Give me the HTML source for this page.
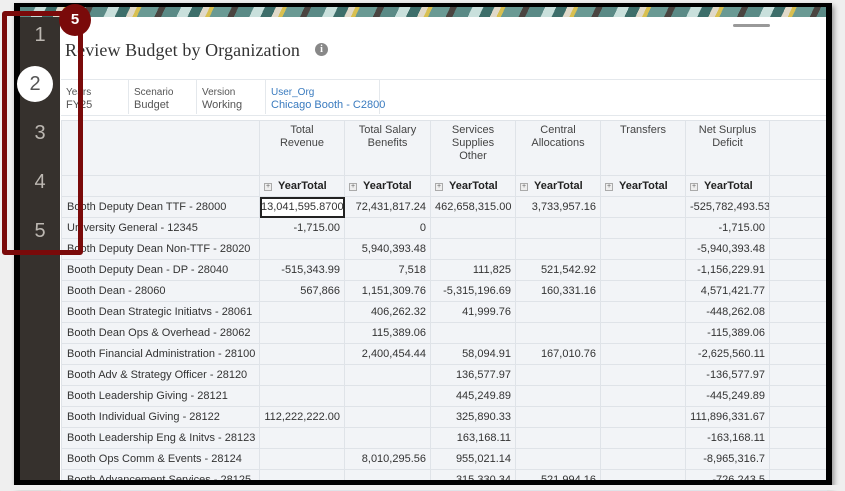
<!DOCTYPE html>
<html><head><meta charset="utf-8"><style>
*{margin:0;padding:0;box-sizing:border-box}
body{width:845px;height:490px;background:#efefef;position:relative;overflow:hidden;font-family:"Liberation Sans",Arial,sans-serif}
.abs{position:absolute}
#frame{left:14px;top:3px;width:818px;height:482px;background:#000;box-shadow:2px 3px 5px rgba(0,0,0,.4)}
#banner{left:20px;top:7px;width:806px;height:10px;background:repeating-linear-gradient(115deg,#5a8a86 0 14px,#c9e0dc 14px 24px,#3d6e6a 24px 34px,#e0d9c9 34px 40px,#d8c050 40px 44px,#6a9a94 44px 60px,#4a4440 60px 66px)}
#side{left:20px;top:17px;width:40px;height:463px;background:#36312d}
.num{position:absolute;left:20px;width:40px;text-align:center;color:#bdb8b2;font-size:20px;font-weight:300}
#c2{left:17px;top:66px;width:36px;height:36px;border-radius:50%;background:#fff;color:#555;font-size:20px;text-align:center;line-height:36px}
#content{left:60px;top:17px;width:766px;height:463px;background:#fff;overflow:hidden}
#title{left:65px;top:40px;font-family:"Liberation Serif",serif;font-size:18px;color:#333;letter-spacing:0.1px}
#info{left:315px;top:43px;width:13px;height:13px;border-radius:50%;background:#888;color:#fff;font:bold 10px "Liberation Serif",serif;text-align:center;line-height:13px}
#grab{left:733px;top:24px;width:37px;height:3px;background:#999;border-radius:2px}
#fbar{left:61px;top:79px;width:765px;height:37px;border-top:1px solid #e4e8ec;border-bottom:1px solid #e4e8ec}
.f{position:absolute;top:80px;height:34px;border-right:1px solid #e4e8ec;font-size:10px;color:#555;padding:6px 0 0 5px;line-height:13px;white-space:nowrap}
.f b{font-weight:normal;font-size:11px}
table{position:absolute;left:61px;top:120px;width:765px;border-collapse:collapse;table-layout:fixed;font-size:11px;color:#333}
td{border:1px solid #dfe3e8;background:#f2f4f7;height:21px;padding:0 4px;white-space:nowrap;overflow:hidden;text-align:right}
td.l{text-align:left;padding-left:5px}
tr.h td{height:55px;vertical-align:top;text-align:center;padding:3px 0 0;line-height:13px;color:#444;white-space:normal}
tr.y td{height:21px;text-align:left;font-weight:bold;font-size:11px;color:#222;padding-left:4px}
.pl{display:inline-block;width:8px;height:8px;border:1px solid #aaa;background:#eee;font-size:7px;line-height:6px;text-align:center;color:#666;vertical-align:1px;margin-right:6px;font-weight:normal}
#sel{outline:2px solid #222;outline-offset:-2px;background:#fff}
#redbox{left:2px;top:11px;width:81px;height:244px;border:5px solid #7a0a0a;border-radius:3px}
#badge{left:59px;top:4px;width:32px;height:32px;border-radius:50%;background:#7a0a0a;color:#fff;font-weight:bold;font-size:15px;text-align:center;line-height:32px}
</style></head><body>
<div id="frame" class="abs"></div>
<div id="banner" class="abs"></div>
<div id="side" class="abs"></div>
<div id="content" class="abs"></div>
<div class="num" style="top:24px">1</div>
<div id="c2" class="abs">2</div>
<div class="num" style="top:122px">3</div>
<div class="num" style="top:171px">4</div>
<div class="num" style="top:220px">5</div>
<div id="title" class="abs">Review Budget by Organization</div>
<div id="info" class="abs">i</div>
<div id="grab" class="abs"></div>
<div id="fbar" class="abs"></div>
<div class="f" style="left:61px;width:68px">Years<br><b>FY25</b></div>
<div class="f" style="left:129px;width:68px">Scenario<br><b>Budget</b></div>
<div class="f" style="left:197px;width:69px">Version<br><b>Working</b></div>
<div class="f" style="left:266px;width:114px;color:#3a7bbf">User_Org<br><b>Chicago Booth - C2800</b></div>
<table>
<colgroup><col style="width:198px"><col style="width:85px"><col style="width:86px"><col style="width:85px"><col style="width:85px"><col style="width:85px"><col style="width:84px"><col style="width:57px"></colgroup>
<tr class="h"><td></td><td>Total<br>Revenue</td><td>Total Salary<br>Benefits</td><td>Services<br>Supplies<br>Other</td><td>Central<br>Allocations</td><td>Transfers</td><td>Net Surplus<br>Deficit</td><td></td></tr>
<tr class="y"><td></td><td><span class="pl">+</span>YearTotal</td><td><span class="pl">+</span>YearTotal</td><td><span class="pl">+</span>YearTotal</td><td><span class="pl">+</span>YearTotal</td><td><span class="pl">+</span>YearTotal</td><td><span class="pl">+</span>YearTotal</td><td></td></tr>
<tr><td class="l">Booth Deputy Dean TTF - 28000</td><td id="sel" style="padding:0 1px;text-align:left">13,041,595.87000</td><td>72,431,817.24</td><td>462,658,315.00</td><td>3,733,957.16</td><td></td><td>-525,782,493.53</td><td></td></tr>
<tr><td class="l">University General - 12345</td><td>-1,715.00</td><td>0</td><td></td><td></td><td></td><td>-1,715.00</td><td></td></tr>
<tr><td class="l">Booth Deputy Dean Non-TTF - 28020</td><td></td><td>5,940,393.48</td><td></td><td></td><td></td><td>-5,940,393.48</td><td></td></tr>
<tr><td class="l">Booth Deputy Dean - DP - 28040</td><td>-515,343.99</td><td>7,518</td><td>111,825</td><td>521,542.92</td><td></td><td>-1,156,229.91</td><td></td></tr>
<tr><td class="l">Booth Dean - 28060</td><td>567,866</td><td>1,151,309.76</td><td>-5,315,196.69</td><td>160,331.16</td><td></td><td>4,571,421.77</td><td></td></tr>
<tr><td class="l">Booth Dean Strategic Initiatvs - 28061</td><td></td><td>406,262.32</td><td>41,999.76</td><td></td><td></td><td>-448,262.08</td><td></td></tr>
<tr><td class="l">Booth Dean Ops &amp; Overhead - 28062</td><td></td><td>115,389.06</td><td></td><td></td><td></td><td>-115,389.06</td><td></td></tr>
<tr><td class="l">Booth Financial Administration - 28100</td><td></td><td>2,400,454.44</td><td>58,094.91</td><td>167,010.76</td><td></td><td>-2,625,560.11</td><td></td></tr>
<tr><td class="l">Booth Adv &amp; Strategy Officer - 28120</td><td></td><td></td><td>136,577.97</td><td></td><td></td><td>-136,577.97</td><td></td></tr>
<tr><td class="l">Booth Leadership Giving - 28121</td><td></td><td></td><td>445,249.89</td><td></td><td></td><td>-445,249.89</td><td></td></tr>
<tr><td class="l">Booth Individual Giving - 28122</td><td>112,222,222.00</td><td></td><td>325,890.33</td><td></td><td></td><td>111,896,331.67</td><td></td></tr>
<tr><td class="l">Booth Leadership Eng &amp; Initvs - 28123</td><td></td><td></td><td>163,168.11</td><td></td><td></td><td>-163,168.11</td><td></td></tr>
<tr><td class="l">Booth Ops Comm &amp; Events - 28124</td><td></td><td>8,010,295.56</td><td>955,021.14</td><td></td><td></td><td>-8,965,316.7</td><td></td></tr>
<tr><td class="l">Booth Advancement Services - 28125</td><td></td><td></td><td>315,330.34</td><td>521,994.16</td><td></td><td>-726,243.5</td><td></td></tr>
</table>
<div class="abs" style="left:14px;top:480px;width:818px;height:5px;background:#000"></div>
<div class="abs" style="left:826px;top:3px;width:6px;height:482px;background:#000"></div>
<div class="abs" style="left:0;top:485px;width:845px;height:5px;background:#efefef"></div>
<div id="redbox" class="abs"></div>
<div id="badge" class="abs">5</div>
</body></html>
